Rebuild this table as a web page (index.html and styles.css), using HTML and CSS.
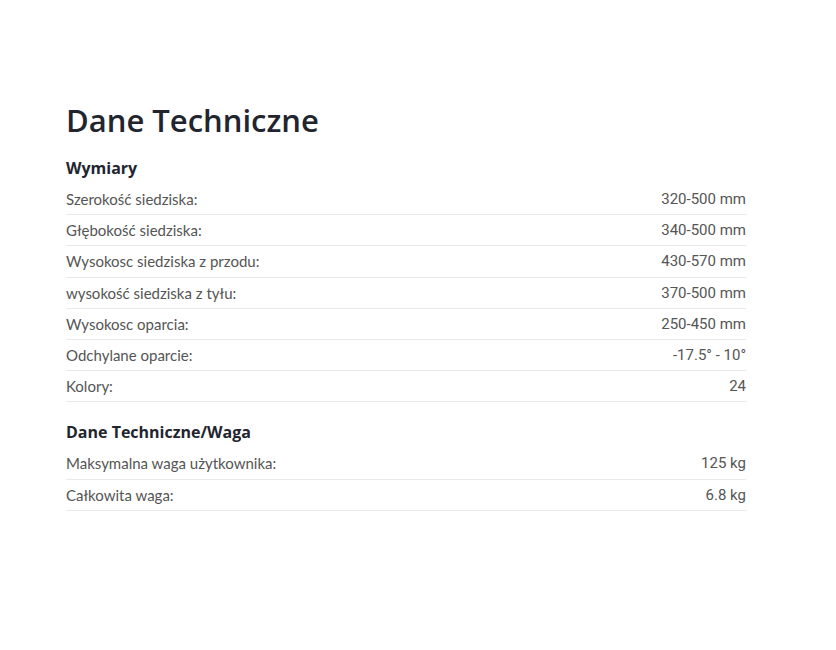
FILE: index.html
```html
<!DOCTYPE html>
<html lang="pl">
<head>
    <meta charset="UTF-8">
    <meta name="viewport" content="width=device-width, initial-scale=1.0">
    <title>Dane Techniczne</title>
    <link rel="stylesheet" href="styles.css">
</head>
<body>
    <div class="container">
        <h1>Dane Techniczne</h1>

        <div class="spec-group">
            <h2>Wymiary</h2>
            <div class="spec-row"><span class="label">Szerokość siedziska:</span><span class="value">320-500 mm</span></div>
            <div class="spec-row"><span class="label">Głębokość siedziska:</span><span class="value">340-500 mm</span></div>
            <div class="spec-row"><span class="label">Wysokosc siedziska z przodu:</span><span class="value">430-570 mm</span></div>
            <div class="spec-row"><span class="label">wysokość siedziska z tyłu:</span><span class="value">370-500 mm</span></div>
            <div class="spec-row"><span class="label">Wysokosc oparcia:</span><span class="value">250-450 mm</span></div>
            <div class="spec-row"><span class="label">Odchylane oparcie:</span><span class="value">-17.5° - 10°</span></div>
            <div class="spec-row"><span class="label">Kolory:</span><span class="value">24</span></div>
        </div>

        <div class="spec-group">
            <h2>Dane Techniczne/Waga</h2>
            <div class="spec-row"><span class="label">Maksymalna waga użytkownika:</span><span class="value">125 kg</span></div>
            <div class="spec-row"><span class="label">Całkowita waga:</span><span class="value">6.8 kg</span></div>
        </div>
    </div>
</body>
</html>
```

FILE: styles.css
```css
:root {
    --heading: #22252e;
    --text: #555555;
    --border: #e9e9e9;
}

* {
    box-sizing: border-box;
    margin: 0;
    padding: 0;
}

body {
    background-color: #ffffff;
    color: var(--text);
    font-family: 'Lato', 'Noto Sans', sans-serif;
}

.container {
    width: 680px;
    margin: 0 0 0 66px;
    padding-top: 100px;
}

h1 {
    color: var(--heading);
    font-family: 'Open Sans', sans-serif;
    font-size: 31px;
    font-weight: 600;
    line-height: 40px;
    margin-bottom: 18px;
}

h2 {
    color: var(--heading);
    font-family: 'Open Sans', sans-serif;
    font-size: 16px;
    font-weight: 700;
    line-height: 20px;
    margin-bottom: 6px;
}

.spec-group + .spec-group {
    margin-top: 20px;
}

.spec-row {
    display: flex;
    justify-content: space-between;
    align-items: center;
    padding: 5px 0;
    line-height: 20.2px;
    font-size: 15px;
    border-bottom: 1px solid var(--border);
}

.value {
    font-family: 'Roboto', 'Liberation Sans', sans-serif;
}
```
